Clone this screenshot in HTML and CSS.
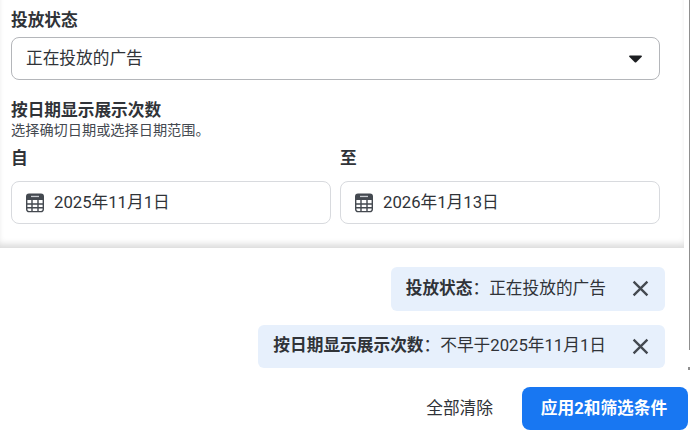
FILE: index.html
```html
<!DOCTYPE html>
<html lang="zh-CN">
<head>
    <meta charset="UTF-8">
    <meta name="viewport" content="width=device-width, initial-scale=1.0">
    <title>投放状态</title>
    <link rel="stylesheet" href="styles.css">
</head>
<body>

    <div class="panel">
        <div class="form">
            <div class="label status-label">投放状态</div>
            <div class="select">
                <span>正在投放的广告</span>
                <svg class="caret" width="13" height="8" viewBox="0 0 14 9" preserveAspectRatio="none"><path d="M1 .5h12c.8 0 1.200.9.700 1.500L7.800 8.200c-.4.4-1.200.4-1.600 0L.3 2C-.2 1.400.2.500 1 .5z" fill="#1c1e21"/></svg>
            </div>
            <div class="label date-label">按日期显示展示次数</div>
            <div class="hint">选择确切日期或选择日期范围。</div>
            <div class="date-row">
                <div class="date-col">
                    <div class="label">自</div>
                    <div class="date-input">
                        <svg class="cal" width="20" height="20" viewBox="0 0 20 20"><path d="M4 .5h12a3 3 0 0 1 3 3V7H1V3.500a3 3 0 0 1 3-3z" fill="#444950"/><rect x="6" y="2.800" width="8" height="1.300" fill="#c9ccd1"/><path d="M1.700 7v9.300A2.300 2.300 0 0 0 4 18.600h12a2.300 2.300 0 0 0 2.300-2.300V7M1.700 11h16.600M1.700 14.800h16.600M7 7v11.600M13 7v11.600" fill="none" stroke="#444950" stroke-width="1.400"/></svg>
                        <span>2025年11月1日</span>
                    </div>
                </div>
                <div class="date-col">
                    <div class="label">至</div>
                    <div class="date-input">
                        <svg class="cal" width="20" height="20" viewBox="0 0 20 20"><path d="M4 .5h12a3 3 0 0 1 3 3V7H1V3.500a3 3 0 0 1 3-3z" fill="#444950"/><rect x="6" y="2.800" width="8" height="1.300" fill="#c9ccd1"/><path d="M1.700 7v9.300A2.300 2.300 0 0 0 4 18.600h12a2.300 2.300 0 0 0 2.300-2.300V7M1.700 11h16.600M1.700 14.800h16.600M7 7v11.600M13 7v11.600" fill="none" stroke="#444950" stroke-width="1.400"/></svg>
                        <span>2026年1月13日</span>
                    </div>
                </div>
            </div>
        </div>

        <div class="footer">
            <div class="chips">
                <div class="chip">
                    <span><b>投放状态</b>：正在投放的广告</span>
                    <svg class="close" width="17" height="17" viewBox="0 0 16 16"><path d="M1.500 1.500l13 13M14.500 1.500l-13 13" stroke="#444950" stroke-width="2.200" fill="none"/></svg>
                </div>
                <div class="chip">
                    <span><b>按日期显示展示次数</b>：不早于2025年11月1日</span>
                    <svg class="close" width="17" height="17" viewBox="0 0 16 16"><path d="M1.500 1.500l13 13M14.500 1.500l-13 13" stroke="#444950" stroke-width="2.200" fill="none"/></svg>
                </div>
            </div>
            <div class="actions">
                <span class="clear">全部清除</span>
                <button class="apply"><span>应用2和筛选条件</span></button>
            </div>
        </div>
    </div>

    <div class="scrollbar"></div>
    <div class="scroll-arrow"></div>

</body>
</html>
```

FILE: styles.css
```css
* {
    box-sizing: border-box;
}
html, body {
    height: 100%;
}
body {
    margin: 0;
    overflow: hidden;
    background: #fff;
    color: #1c1e21;
    font-family: Roboto, "Noto Sans CJK SC", sans-serif;
    font-size: 16.7px;
}
.panel {
    width: 689px;
}
.form {
    width: 684px;
    height: 248px;
    padding: 11px 24px 0 11px;
    box-shadow: 0 -6px 6px -2px rgba(0, 0, 0, 0.14) inset;
}
.label {
    font-weight: 700;
    line-height: 20px;
    color: #303338;
}
.select {
    display: flex;
    align-items: center;
    justify-content: space-between;
    height: 43px;
    margin-top: 6px;
    padding: 0 17px 0 14px;
    border: 1px solid #b4b6ba;
    border-radius: 8px;
    color: #303338;
}
.select span {
    margin-bottom: 3px;
}
.date-label {
    margin-top: 21px;
}
.hint {
    margin-top: 1px;
    font-size: 14.2px;
    line-height: 17px;
    color: #444950;
}
.date-row {
    display: flex;
    gap: 9px;
    margin-top: 10px;
}
.date-col {
    flex: 1;
}
.date-input {
    display: flex;
    align-items: center;
    gap: 9px;
    height: 43px;
    margin-top: 12px;
    padding: 0 13px;
    border: 1px solid #d8dade;
    border-radius: 8px;
    color: #303338;
}
.date-input span {
    margin-bottom: 3px;
}
.footer {
    padding: 19px 0 0;
}
.chips {
    display: flex;
    flex-direction: column;
    align-items: flex-end;
    gap: 14px;
    padding-right: 24px;
}
.chip {
    display: flex;
    align-items: center;
    gap: 26px;
    height: 43.500px;
    padding: 0 16px 0 15px;
    border-radius: 6px;
    background: #e7f0fc;
    color: #303338;
}
.chip span {
    margin-bottom: 4px;
}
.chip b {
    font-weight: 700;
}
.actions {
    display: flex;
    align-items: center;
    justify-content: flex-end;
    gap: 29px;
    margin-top: 19px;
    padding-right: 1px;
}
.clear {
    margin-bottom: 4px;
    color: #303338;
}
.apply {
    width: 166px;
    height: 43px;
    padding: 0 2px 4px 0;
    border: none;
    border-radius: 8px;
    background: #1877f2;
    color: #fff;
    font-family: inherit;
    font-size: 16.7px;
    font-weight: 700;
}
.scrollbar {
    position: absolute;
    top: 0;
    right: 0;
    width: 1px;
    height: 350px;
    background: #8f8f8f;
}
.scroll-arrow {
    position: absolute;
    top: 367px;
    right: 0;
    width: 2px;
    height: 3px;
    background: #8f8f8f;
}
```
